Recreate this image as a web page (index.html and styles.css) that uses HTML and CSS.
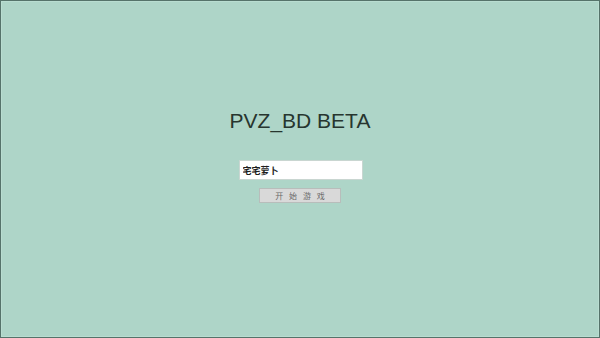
FILE: index.html
```html
<!DOCTYPE html>
<html lang="zh">
<head>
<meta charset="utf-8">
<title>PVZ_BD BETA</title>
<link rel="stylesheet" href="styles.css">
</head>
<body>
<div class="screen">
  <div class="inner">
    <h1 class="title">PVZ_BD BETA</h1>
    <input class="name-input" type="text" value="宅宅萝卜">
    <button class="start-btn" type="button">开 始 游 戏</button>
  </div>
</div>
</body>
</html>
```

FILE: styles.css
```css
html, body {
  margin: 0;
  padding: 0;
}
body {
  width: 600px;
  height: 338px;
  overflow: hidden;
  font-family: "Liberation Sans", Arial, "Noto Sans CJK SC", sans-serif;
}
.screen {
  width: 600px;
  height: 338px;
  box-sizing: border-box;
  border: 1px solid #55736a;
  background: #aed5c8;
}
.inner {
  height: 100%;
  box-sizing: border-box;
  border: 1px solid #b9ddd1;
  display: flex;
  flex-direction: column;
  align-items: center;
  padding-top: 107px;
}
.title {
  margin: 0;
  font-size: 21px;
  font-weight: normal;
  line-height: 24px;
  color: #27352f;
}
.name-input {
  margin-top: 27px;
  width: 124px;
  height: 20px;
  box-sizing: border-box;
  border: 1px solid #c9d6d1;
  background: #ffffff;
  padding: 0 3px;
  font-family: "Noto Sans CJK SC", sans-serif;
  font-size: 9px;
  font-weight: bold;
  color: #1e1e1e;
  outline: none;
  margin-left: 1px;
}
.start-btn {
  margin-top: 8px;
  width: 82px;
  height: 15px;
  box-sizing: border-box;
  border: 1px solid #b8bdbb;
  background: #d9d9d9;
  padding: 0;
  font-family: "Noto Sans CJK SC", sans-serif;
  font-size: 8px;
  line-height: 13px;
  letter-spacing: 2px;
  color: #6a6a6a;
  text-indent: 2px;
}
```
